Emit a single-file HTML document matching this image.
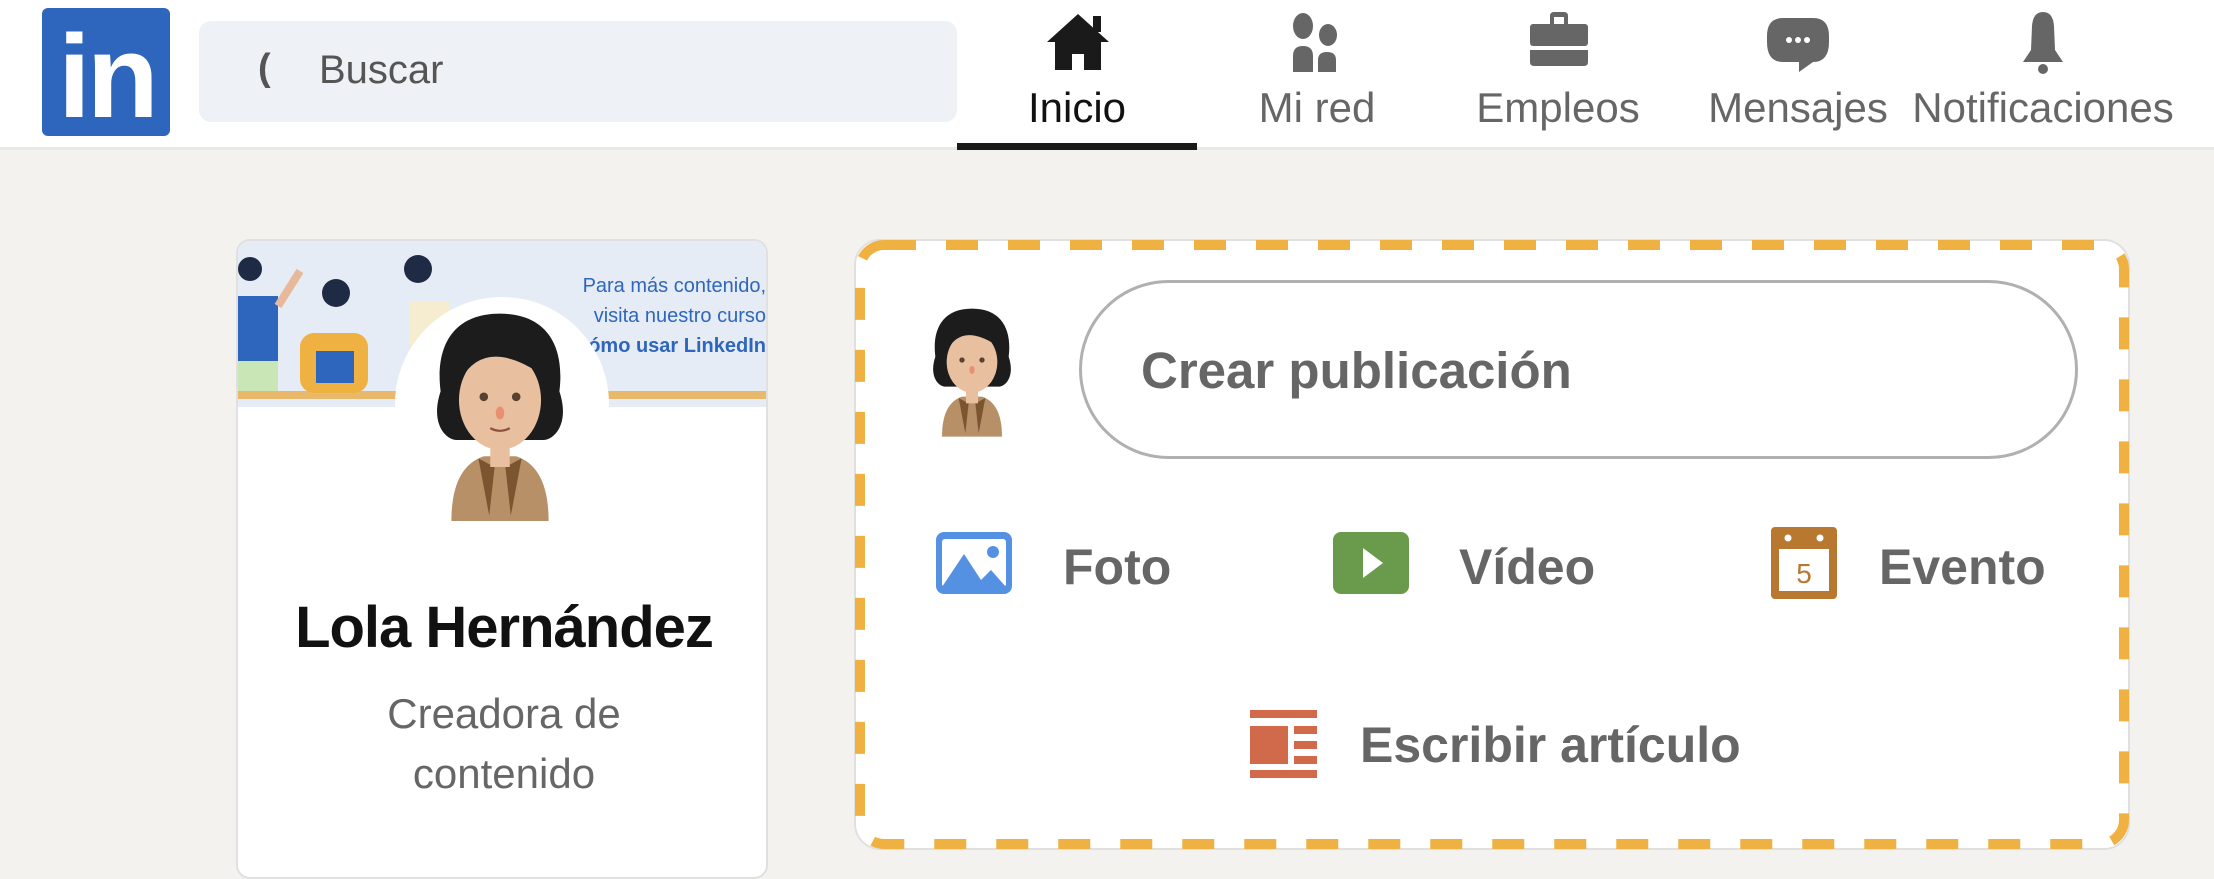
<!DOCTYPE html>
<html><head><meta charset="utf-8"><style>
*{margin:0;padding:0;box-sizing:border-box}
body{width:2214px;height:864px;background:#f3f2ef;font-family:"Liberation Sans",Arial,sans-serif;position:relative;overflow:hidden}
.hdr{position:absolute;left:0;top:0;width:2214px;height:150px;background:#fff;border-bottom:3px solid #e8e8e8}
.abs{position:absolute}
.nav{position:absolute;top:84px;font-size:42px;color:#666;transform:translateX(-50%);white-space:nowrap}
.lbl{position:absolute;font-size:50px;font-weight:bold;color:#666;white-space:nowrap}
</style></head><body>
<div class="hdr"></div>
<div class="abs" style="left:42px;top:8px;width:128px;height:128px;background:#2e66bd;border-radius:6px"></div>
<div class="abs" style="left:58px;top:22px;font-size:118px;font-weight:bold;color:#fff;letter-spacing:-4px;line-height:110px">in</div>
<div class="abs" style="left:199px;top:21px;width:758px;height:101px;background:#eef1f5;border-radius:12px"></div>
<div class="abs" style="left:258px;top:47px;font-size:38px;color:#555;font-weight:bold">(</div>
<div class="abs" style="left:319px;top:48px;font-size:40px;color:#555">Buscar</div>
<svg class="abs" style="left:1045px;top:12px" width="66" height="60" viewBox="0 0 66 60"><path d="M33 2 L2 30 H10 V58 H27 V42 H39 V58 H56 V30 H64 Z" fill="#1a1a1a"/><rect x="48" y="4" width="8" height="16" fill="#1a1a1a"/></svg>
<div class="nav" style="left:1077px;color:#111">Inicio</div>
<div class="abs" style="left:957px;top:143px;width:240px;height:7px;background:#1a1a1a"></div>
<svg class="abs" style="left:1290px;top:12px" width="56" height="62" viewBox="0 0 56 62"><ellipse cx="13" cy="14" rx="10" ry="13" fill="#666"/><ellipse cx="38" cy="23" rx="9" ry="11" fill="#666"/><path d="M3 60 V44 Q3 34 13 34 Q23 34 23 44 V60Z M28 60 V48 Q28 40 37 40 Q46 40 46 48 V60Z" fill="#666"/></svg>
<div class="nav" style="left:1317px">Mi red</div>
<svg class="abs" style="left:1528px;top:12px" width="62" height="56" viewBox="0 0 62 56"><path d="M22 4 Q22 0 26 0 H36 Q40 0 40 4 V12 H36 V5 H26 V12 H22Z" fill="#666"/><rect x="2" y="12" width="58" height="22" rx="3" fill="#666"/><path d="M2 38 H60 V50 Q60 54 56 54 H6 Q2 54 2 50Z" fill="#666"/></svg>
<div class="nav" style="left:1558px">Empleos</div>
<svg class="abs" style="left:1765px;top:16px" width="66" height="58" viewBox="0 0 66 58"><path d="M18 2 H48 Q64 2 64 20 V26 Q64 46 48 46 L34 56 V46 H18 Q2 46 2 26 V20 Q2 2 18 2Z" fill="#666"/><circle cx="24" cy="24" r="3" fill="#fff"/><circle cx="33" cy="24" r="3" fill="#fff"/><circle cx="42" cy="24" r="3" fill="#fff"/></svg>
<div class="nav" style="left:1798px">Mensajes</div>
<svg class="abs" style="left:2013px;top:12px" width="60" height="62" viewBox="0 0 60 62"><path d="M30 0 Q40 0 41 14 L42 38 L50 50 H10 L18 38 L19 14 Q20 0 30 0Z" fill="#666"/><ellipse cx="30" cy="57" rx="5" ry="5" fill="#666"/></svg>
<div class="nav" style="left:2043px">Notificaciones</div>

<div class="abs" style="left:236px;top:239px;width:532px;height:640px;background:#fff;border:2px solid #e0e0e0;border-radius:14px;overflow:hidden">
  <div class="abs" style="left:0;top:0;width:532px;height:166px;background:#e6ecf5"></div>
  <div class="abs" style="left:0;top:150px;width:532px;height:8px;background:#e8b96a"></div>
  <svg class="abs" style="left:0;top:10px" width="230" height="150" viewBox="0 0 230 150"><circle cx="12" cy="18" r="12" fill="#1f2a44"/><rect x="0" y="45" width="40" height="65" fill="#2e66bd"/><rect x="0" y="110" width="40" height="30" fill="#c9e6b6"/><path d="M40 55 L62 20" stroke="#e8b89a" stroke-width="8"/><circle cx="98" cy="42" r="14" fill="#1f2a44"/><rect x="62" y="82" width="68" height="60" rx="14" fill="#f0b143"/><rect x="78" y="100" width="38" height="32" fill="#2e66bd"/><circle cx="180" cy="18" r="14" fill="#1f2a44"/><rect x="172" y="50" width="40" height="50" fill="#f6ecd0"/></svg>
  <div class="abs" style="left:318px;top:30px;width:210px;text-align:right;font-size:20px;color:#2e66bd;line-height:30px">Para más contenido,<br>visita nuestro curso<br><b>Cómo usar LinkedIn</b></div>
  <div class="abs" style="left:157px;top:56px;width:214px;height:214px;border-radius:50%;background:#fff"></div>
  <svg class="abs" style="left:181px;top:64px" width="162" height="216" viewBox="0 0 150 200"><path d="M75 8 C30 8 15 40 20 80 C10 110 25 125 35 125 L115 125 C125 125 140 110 130 80 C135 40 120 8 75 8Z" fill="#1c1c1c"/><ellipse cx="75" cy="88" rx="38" ry="46" fill="#e8c0a0"/><path d="M38 70 Q60 30 110 62 Q100 35 75 30 Q45 32 38 70Z" fill="#1c1c1c"/><circle cx="60" cy="85" r="4" fill="#5a4030"/><circle cx="90" cy="85" r="4" fill="#5a4030"/><ellipse cx="75" cy="100" rx="4" ry="6" fill="#e89070"/><path d="M66 114 Q75 119 84 114" stroke="#8a5040" stroke-width="2" fill="none"/><path d="M30 200 Q30 150 60 140 L90 140 Q120 150 120 200Z" fill="#b89068"/><path d="M55 142 L65 195 L70 150Z M95 142 L85 195 L80 150Z" fill="#7a5530"/><rect x="66" y="128" width="18" height="22" fill="#e8c0a0"/></svg>
  <div class="abs" style="left:0;top:353px;width:532px;text-align:center;font-size:58px;font-weight:bold;color:#111;letter-spacing:-1px">Lola Hernández</div>
  <div class="abs" style="left:0;top:443px;width:532px;text-align:center;font-size:42px;color:#666;line-height:60px">Creadora de<br>contenido</div>
</div>

<div class="abs" style="left:854px;top:239px;width:1276px;height:611px;background:#fff;border-radius:26px;border:2px solid #e0e0e0"></div>
<svg class="abs" style="left:854px;top:239px" width="1276" height="611"><rect x="6" y="6" width="1264" height="599" rx="24" fill="none" stroke="#f0b143" stroke-width="10" stroke-dasharray="32 30"/></svg>
<svg class="abs" style="left:922px;top:297px" width="100" height="146" viewBox="0 0 150 200"><path d="M75 8 C30 8 15 40 20 80 C10 110 25 125 35 125 L115 125 C125 125 140 110 130 80 C135 40 120 8 75 8Z" fill="#1c1c1c"/><ellipse cx="75" cy="88" rx="38" ry="46" fill="#e8c0a0"/><path d="M38 70 Q60 30 110 62 Q100 35 75 30 Q45 32 38 70Z" fill="#1c1c1c"/><circle cx="60" cy="85" r="4" fill="#5a4030"/><circle cx="90" cy="85" r="4" fill="#5a4030"/><ellipse cx="75" cy="100" rx="4" ry="6" fill="#e89070"/><path d="M30 200 Q30 150 60 140 L90 140 Q120 150 120 200Z" fill="#b89068"/><path d="M55 142 L65 195 L70 150Z M95 142 L85 195 L80 150Z" fill="#7a5530"/><rect x="66" y="128" width="18" height="22" fill="#e8c0a0"/></svg>
<div class="abs" style="left:1079px;top:280px;width:999px;height:179px;border:3px solid #b0b0b0;border-radius:90px"></div>
<div class="lbl" style="left:1141px;top:341px;font-size:51px">Crear publicación</div>

<svg class="abs" style="left:936px;top:532px" width="76" height="62" viewBox="0 0 76 62"><rect x="0" y="0" width="76" height="62" rx="8" fill="#5591e3"/><rect x="6" y="7" width="64" height="48" rx="3" fill="#fff"/><path d="M6 55 L28 22 L45 48 L55 38 L70 55Z" fill="#5591e3"/><circle cx="57" cy="20" r="6" fill="#5591e3"/></svg>
<div class="lbl" style="left:1063px;top:538px">Foto</div>
<svg class="abs" style="left:1333px;top:532px" width="76" height="62" viewBox="0 0 76 62"><rect width="76" height="62" rx="8" fill="#6a9a4c"/><path d="M30 16 L50 31 L30 46Z" fill="#fff"/></svg>
<div class="lbl" style="left:1459px;top:538px">Vídeo</div>
<svg class="abs" style="left:1771px;top:527px" width="66" height="72" viewBox="0 0 66 72"><rect width="66" height="72" rx="4" fill="#b8782f"/><rect x="8" y="22" width="50" height="42" fill="#fff"/><circle cx="17" cy="11" r="3.5" fill="#fff"/><circle cx="49" cy="11" r="3.5" fill="#fff"/><text x="33" y="56" font-size="28" font-family="Liberation Sans" fill="#b8782f" text-anchor="middle">5</text></svg>
<div class="lbl" style="left:1879px;top:538px">Evento</div>
<svg class="abs" style="left:1250px;top:710px" width="67" height="68" viewBox="0 0 67 68"><g fill="#d06a4a"><rect x="0" y="0" width="67" height="8"/><rect x="0" y="60" width="67" height="8"/><rect x="0" y="16" width="38" height="38"/><rect x="44" y="16" width="23" height="8"/><rect x="44" y="31" width="23" height="8"/><rect x="44" y="46" width="23" height="8"/></g></svg>
<div class="lbl" style="left:1360px;top:716px">Escribir artículo</div>
</body></html>
